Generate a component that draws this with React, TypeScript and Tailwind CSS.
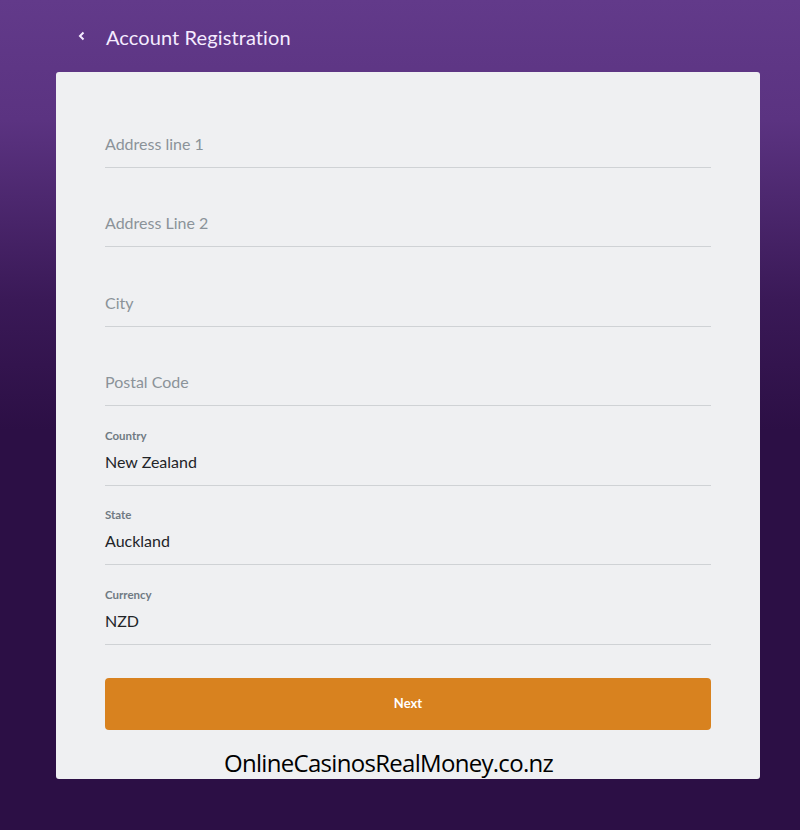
import React from 'react';

interface Field {
  id: string;
  placeholder?: string;
  label?: string;
  value?: string;
}

const fields: Field[] = [
  { id: 'address1', placeholder: 'Address line 1' },
  { id: 'address2', placeholder: 'Address Line 2' },
  { id: 'city', placeholder: 'City' },
  { id: 'postal', placeholder: 'Postal Code' },
  { id: 'country', label: 'Country', value: 'New Zealand' },
  { id: 'state', label: 'State', value: 'Auckland' },
  { id: 'currency', label: 'Currency', value: 'NZD' },
];

export default function App() {
  return (
    <div className="min-h-[830px] w-full bg-[linear-gradient(180deg,#623a8a_0px,#5b3381_120px,#3a1957_300px,#2c0f45_430px,#2c0f45_830px)] font-['Lato',sans-serif] pb-[52px]">
      {/* Header */}
      <div className="h-[72px] flex items-start pt-[25px] pl-[76px] gap-[18px] text-[#f5ecff]">
        <svg width="12" height="12" viewBox="0 0 12 12" fill="none" stroke="currentColor" strokeWidth="2" className="mt-[5px]">
          <path d="M7.5 2.5 4 6l3.5 3.5" />
        </svg>
        <h1 className="text-[20px] leading-[24px] font-normal tracking-[0.1px]">Account Registration</h1>
      </div>

      {/* Card */}
      <div className="mx-[56px] w-[704px] bg-[#eff0f2] rounded-[3px] pt-[16px] px-[49px]">
        {fields.map((f) => (
          <div key={f.id} className="h-[79.5px] border-b border-[#cfd2d5] flex flex-col justify-end pb-[14px]">
            {f.label ? (
              <>
                <span className="text-[11.5px] font-bold text-[#6f7a83] leading-[14px] mb-[9px]">{f.label}</span>
                <span className="text-[16px] text-[#222428] leading-[19px]">{f.value}</span>
              </>
            ) : (
              <span className="text-[16px] text-[#8b9399] leading-[19px]">{f.placeholder}</span>
            )}
          </div>
        ))}

        <button className="mt-[33px] w-full h-[52px] rounded-[4px] bg-[#d8821f] text-white text-[13px] font-bold">
          Next
        </button>

        <div className="h-[49px] flex items-end pb-[1px] pl-[119px]">
          <span className="font-['Open_Sans',sans-serif] text-[24px] leading-[30px] text-black tracking-[-0.7px]">OnlineCasinosRealMoney.co.nz</span>
        </div>
      </div>
    </div>
  );
}
